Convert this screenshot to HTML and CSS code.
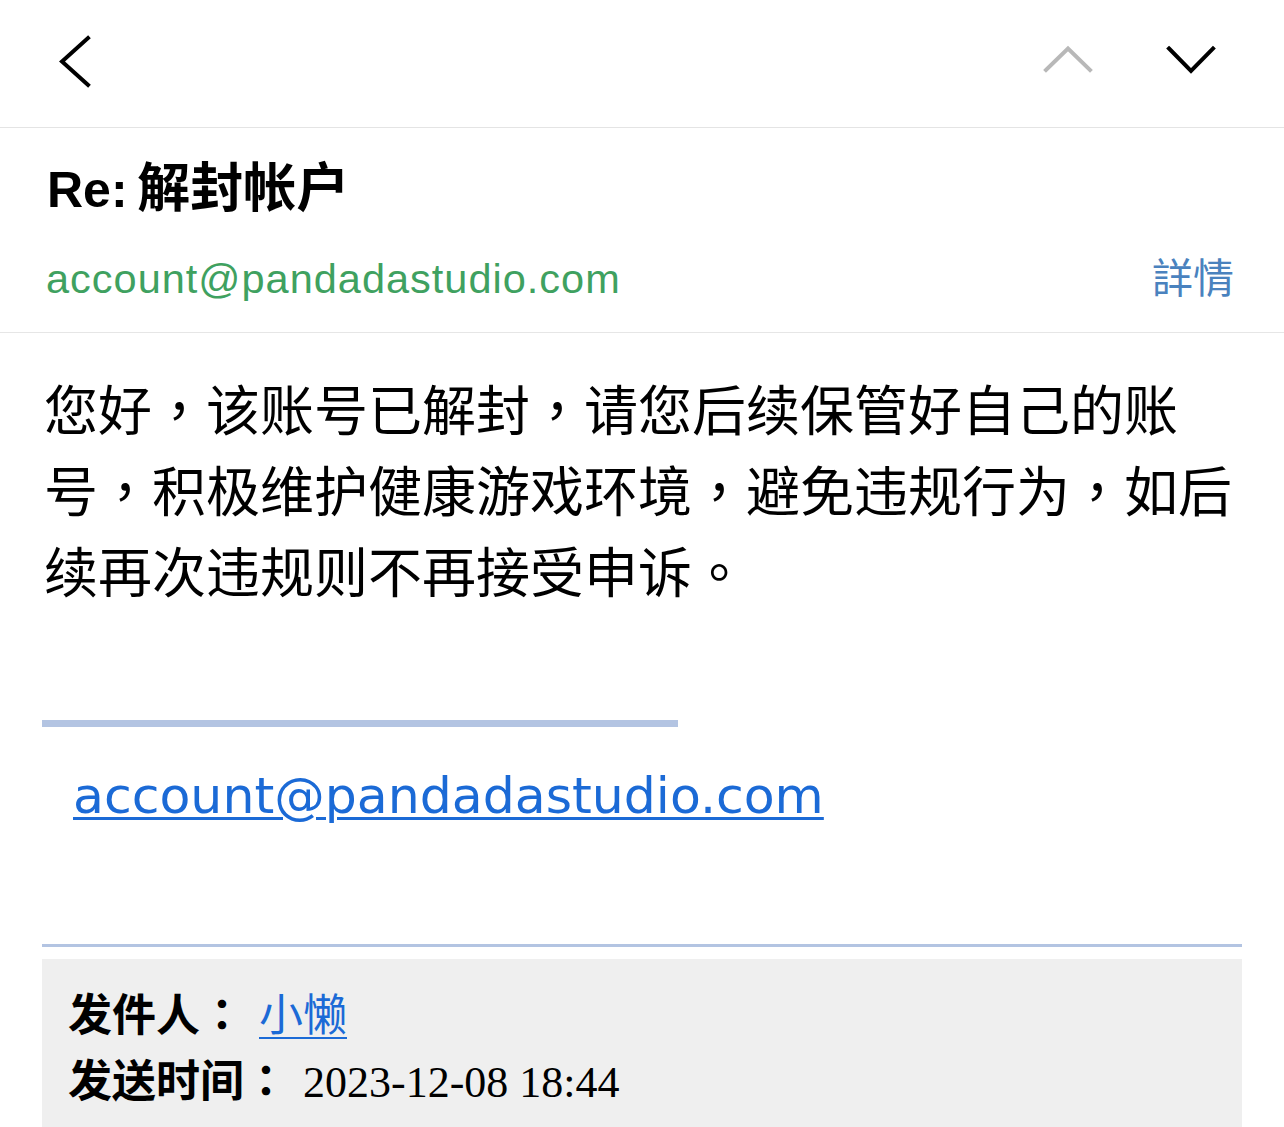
FILE: index.html
```html
<!DOCTYPE html>
<html lang="zh-CN">
<head>
<meta charset="utf-8">
<title>Re: 解封帐户</title>
<link rel="stylesheet" href="styles.css">
</head>
<body>
<header class="topbar">
  <svg class="icon-back" width="60" height="127" viewBox="40 0 60 127" aria-hidden="true">
    <polyline points="88,38 62,61.5 88,85" fill="none" stroke="#000" stroke-width="4" stroke-linecap="square" stroke-linejoin="miter"/>
  </svg>
  <div class="nav-arrows">
    <svg class="icon-up" width="76" height="127" viewBox="1030 0 76 127" aria-hidden="true">
      <polyline points="1046,70 1068,48.5 1090,70" fill="none" stroke="#b8b8b8" stroke-width="4" stroke-linecap="square"/>
    </svg>
    <svg class="icon-down" width="80" height="127" viewBox="1150 0 80 127" aria-hidden="true">
      <polyline points="1169,48.5 1191,71 1213,48.5" fill="none" stroke="#000" stroke-width="4" stroke-linecap="square"/>
    </svg>
  </div>
</header>

<section class="subject">
  <h1 class="subject-title"><span class="re">Re:</span> 解封帐户</h1>
  <div class="sender-row">
    <span class="sender-email">account@pandadastudio.com</span>
    <span class="details" lang="zh-TW">詳情</span>
  </div>
</section>

<main class="mail-body">
  <p class="message">您好<span class="punct" lang="zh-TW">，</span>该账号已解封<span class="punct" lang="zh-TW">，</span>请您后续保管好自己的账号<span class="punct" lang="zh-TW">，</span>积极维护健康游戏环境<span class="punct" lang="zh-TW">，</span>避免违规行为<span class="punct" lang="zh-TW">，</span>如后续再次违规则不再接受申诉<span class="punct" lang="zh-TW">。</span></p>
  <div class="sig-bar"></div>
  <p class="sig-link"><a href="#">account@pandadastudio.com</a></p>
  <div class="quote-rule"></div>
  <div class="quote-box">
    <div class="quote-line"><span class="label">发件人<span class="punct" lang="zh-TW">：</span></span><a class="name" href="#">小懒</a></div>
    <div class="quote-line"><span class="label">发送时间<span class="punct" lang="zh-TW">：</span></span><span class="date">2023-12-08 18:44</span></div>
    <div class="quote-line"><span class="label">收件人<span class="punct" lang="zh-TW">：</span></span></div>
  </div>
</main>
</body>
</html>
```

FILE: styles.css
```css
html, body {
  margin: 0;
  padding: 0;
  background: #ffffff;
  overflow: hidden;
}

body {
  font-family: "Noto Sans CJK SC", sans-serif;
  color: #000;
}

.topbar {
  height: 127px;
  border-bottom: 1px solid #e4e4e4;
  display: flex;
  justify-content: space-between;
  align-items: stretch;
  padding: 0 54px 0 40px;
}

.topbar svg {
  display: block;
}

.nav-arrows {
  display: flex;
  gap: 44px;
}

.subject {
  padding: 29px 50px 32px 47px;
  border-bottom: 1px solid #e6e6e6;
}

.subject-title {
  margin: 0;
  font-family: "Liberation Sans", "Noto Sans CJK SC", sans-serif;
  font-weight: 700;
  font-size: 53px;
  line-height: 64px;
  height: 64px;
  word-spacing: -5px;
}

.re {
  font-size: 50px;
}

.sender-row {
  margin-top: 29px;
  display: flex;
  justify-content: space-between;
  align-items: baseline;
  height: 50px;
}

.sender-email {
  font-family: "Liberation Sans", sans-serif;
  font-size: 41.5px;
  line-height: 50px;
  letter-spacing: 1px;
  color: #3fa160;
  margin-left: -1px;
}

.details {
  font-family: "Noto Sans CJK TC", "Noto Sans CJK SC", sans-serif;
  font-size: 41px;
  line-height: 50px;
  color: #4a82be;
}

.punct {
  font-family: "Noto Sans CJK TC", "Noto Sans CJK SC", sans-serif;
}

.mail-body {
  padding: 34px 42px 0 42px;
}

.message {
  margin: 0 0 0 2px;
  font-size: 54px;
  line-height: 81px;
}

.sig-bar {
  margin-top: 110px;
  width: 636px;
  height: 7px;
  background: #b3c4e2;
}

.sig-link {
  margin: 33px 0 0 31px;
  font-family: "DejaVu Sans", sans-serif;
  font-size: 50.5px;
  line-height: 72px;
}

.sig-link a {
  color: #1b6ad6;
  text-decoration: underline;
  text-decoration-thickness: 3px;
  text-underline-offset: 4px;
}

.quote-rule {
  margin-top: 112px;
  height: 3px;
  background: #b3c4e2;
}

.quote-box {
  margin-top: 12px;
  background: #efefef;
  padding: 20px 26px 30px 26px;
}

.quote-line {
  font-size: 44px;
  line-height: 66px;
  white-space: nowrap;
}

.label {
  font-weight: 700;
  margin-right: 15px;
}

.name {
  color: #1b6ad6;
  text-decoration: underline;
  text-decoration-thickness: 2px;
  text-underline-offset: 6px;
}

.date {
  font-family: "Liberation Serif", serif;
  font-size: 44px;
}
```
